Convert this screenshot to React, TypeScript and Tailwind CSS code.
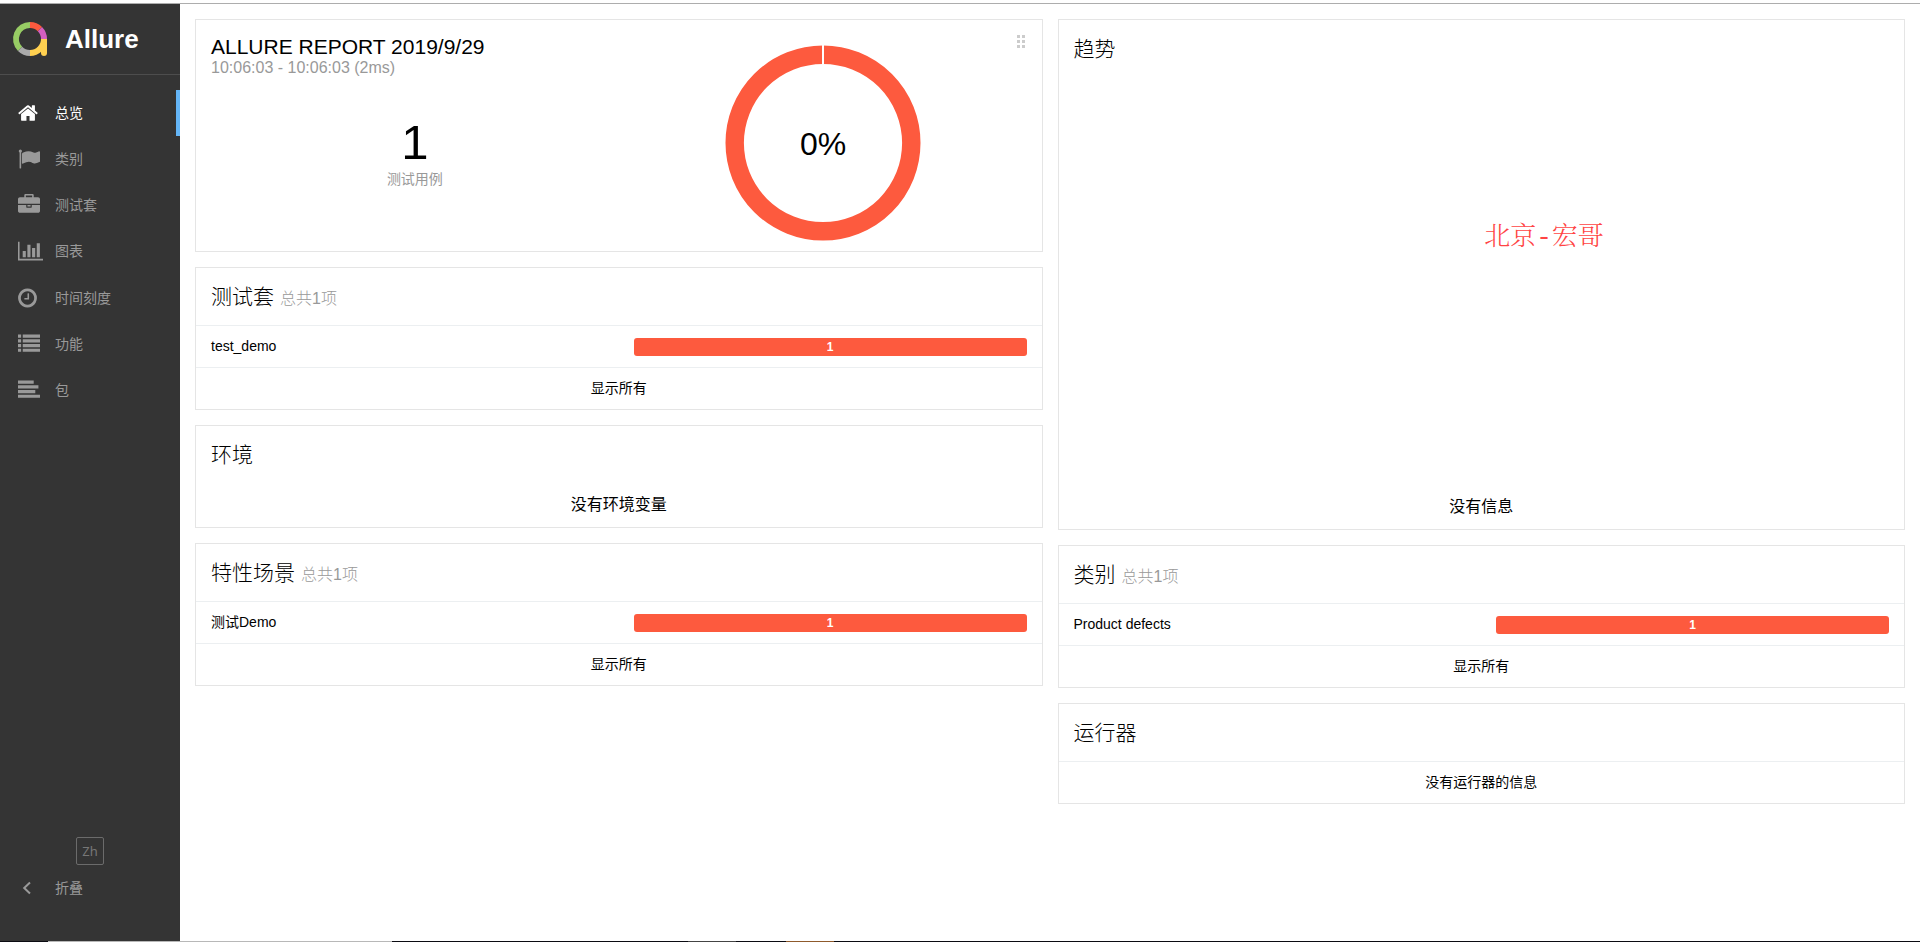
import type { ReactNode } from 'react';

type IconName = 'home' | 'flag' | 'briefcase' | 'chart' | 'clock' | 'list' | 'align';

const icons: Record<IconName, { x: number; width: number; size: string; d: string }> = {
  home: {
    x: 64,
    width: 1664,
    size: 'w-5',
    d: 'M1472 992v480q0 26-19 45t-45 19h-384v-384h-256v384h-384q-26 0-45-19t-19-45v-480q0-1 .5-3t.5-3l575-474 575 474q1 2 1 6zm223-69l-62 74q-8 9-21 11h-3q-13 0-21-7l-692-577-692 577q-12 8-24 7-13-2-21-11l-62-74q-8-10-7-23.5t11-21.5l719-599q32-26 76-26t76 26l244 204v-195q0-14 9-23t23-9h192q14 0 23 9t9 23v408l219 182q10 8 11 21.5t-7 23.5z',
  },
  flag: {
    x: 0,
    width: 1792,
    size: 'w-[22px]',
    d: 'M320 256q0 72-64 110v1266q0 13-9.5 22.5t-22.5 9.5h-64q-13 0-22.5-9.5t-9.5-22.5v-1266q-64-38-64-110 0-53 37.5-90.5t90.5-37.5 90.5 37.5 37.5 90.5zm1472 64v763q0 25-12.5 38.5t-39.5 27.5q-215 116-369 116-61 0-123.5-22t-108.5-48-115.5-48-142.5-22q-192 0-464 146-17 9-33 9-26 0-45-19t-19-45v-742q0-32 31-55 21-14 79-43 236-120 421-120 107 0 200 29t219 88q38 19 88 19 54 0 117.5-21t110-47 88-47 54.5-21q26 0 45 19t19 45z',
  },
  briefcase: {
    x: 0,
    width: 1792,
    size: 'w-[22px]',
    d: 'M640 256h512v-128h-512v128zm1152 640v480q0 66-47 113t-113 47h-1472q-66 0-113-47t-47-113v-480h672v160q0 26 19 45t45 19h320q26 0 45-19t19-45v-160h672zm-768 0v128h-256v-128h256zm768-480v384h-1792v-384q0-66 47-113t113-47h352v-160q0-40 28-68t68-28h576q40 0 68 28t28 68v160h352q66 0 113 47t47 113z',
  },
  chart: {
    x: 0,
    width: 2048,
    size: 'w-[25px]',
    d: 'M640 896v512h-256v-512h256zm384-512v1024h-256v-1024h256zm1024 1152v128h-2048v-1536h128v1408h1920zm-640-896v768h-256v-768h256zm384-384v1152h-256v-1152h256z',
  },
  clock: {
    x: 128,
    width: 1536,
    size: 'w-[19px]',
    d: 'M1024 544v448q0 14-9 23t-23 9h-320q-14 0-23-9t-9-23v-64q0-14 9-23t23-9h224v-352q0-14 9-23t23-9h64q14 0 23 9t9 23zm416 352q0-148-73-273t-198-198-273-73-273 73-198 198-73 273 73 273 198 198 273 73 273-73 198-198 73-273zm224 0q0 209-103 385.5t-279.5 279.5-385.5 103-385.5-103-279.5-279.5-103-385.5 103-385.5 279.5-279.5 385.5-103 385.5 103 279.5 279.5 103 385.5z',
  },
  list: {
    x: 0,
    width: 1792,
    size: 'w-[22px]',
    d: 'M0 128h256v256H0zM384 128h1408v256H384zM0 512h256v256H0zM384 512h1408v256H384zM0 896h256v256H0zM384 896h1408v256H384zM0 1280h256v256H0zM384 1280h1408v256H384z',
  },
  align: {
    x: 0,
    width: 1792,
    size: 'w-[22px]',
    d: 'M0 128h1280v256H0zM0 512h1664v256H0zM0 896h1408v256H0zM0 1280h1792v256H0z',
  },
};

const navItems: { icon: IconName; label: string }[] = [
  { icon: 'home', label: '总览' },
  { icon: 'flag', label: '类别' },
  { icon: 'briefcase', label: '测试套' },
  { icon: 'chart', label: '图表' },
  { icon: 'clock', label: '时间刻度' },
  { icon: 'list', label: '功能' },
  { icon: 'align', label: '包' },
];

function NavIcon({ name }: { name: IconName }) {
  const { x, width, size, d } = icons[name];
  return (
    <span className="w-[37px] shrink-0">
      <svg viewBox={`${x} 0 ${width} 1792`} className={`h-[22px] ${size}`} fill="currentColor" aria-hidden="true">
        <path d={d} />
      </svg>
    </span>
  );
}

function Logo() {
  return (
    <svg viewBox="0 0 36 36" className="size-9" fill="none" strokeWidth="6" aria-hidden="true">
      <path d="M18 4A14 14 0 0 0 8.1 27.9" stroke="#97cc64" />
      <path d="M8.1 27.9A14 14 0 0 0 18 32" stroke="#aaaaaa" />
      <path d="M18 4A14 14 0 0 1 27.9 8.1" stroke="#fd5a3e" />
      <path d="M27.9 8.1A14 14 0 0 1 32 18" stroke="#d35ebe" />
      <path d="M32 18A14 14 0 0 1 18 32" stroke="#ffd050" />
      <path d="M32 18V32" stroke="#ffd050" />
      <circle cx="32" cy="32" r="3" fill="#ffd050" stroke="none" />
    </svg>
  );
}

function Sidebar() {
  return (
    <aside className="flex w-[180px] shrink-0 flex-col bg-[#343434] text-[#999]">
      <a href="#" className="flex h-[71px] items-center border-b border-[#4d4d4d] pl-3 text-white">
        <Logo />
        <span className="pt-0.5 pl-[17px] text-[26px] font-bold">Allure</span>
      </a>
      <nav className="mt-[15px] grid h-[324px] shrink-0 grid-rows-7">
        {navItems.map(({ icon, label }, i) => (
          <a
            key={icon}
            href={`#${icon}`}
            className={
              i === 0
                ? 'flex items-center border-r-4 border-[#64b5f6] pb-px pl-[18px] text-white'
                : 'flex items-center border-r-4 border-transparent pb-px pl-[18px]'
            }
          >
            <NavIcon name={icon} />
            {label}
          </a>
        ))}
      </nav>
      <div className="mt-auto flex flex-col pb-[30px]">
        <button className="size-7 self-center rounded-xs border border-[#6b6b6b] font-['Noto_Sans',sans-serif] text-[13px] leading-6 text-[#777]">
          Zh
        </button>
        <button className="flex h-[46px] items-center pl-[18px] text-left">
          <span className="w-[37px] pl-1">
            <svg viewBox="0 0 10 14" className="h-3.5 w-2.5" fill="none" stroke="currentColor" strokeWidth="2" aria-hidden="true">
              <path d="M8 1.5L2.2 7L8 12.5" />
            </svg>
          </span>
          折叠
        </button>
      </div>
    </aside>
  );
}

function Card({ children }: { children: ReactNode }) {
  return <section className="relative border border-[#e5e5e5]">{children}</section>;
}

function CardTitle({ title, subtitle }: { title: string; subtitle?: string }) {
  return (
    <h2 className="h-[57px] px-[15px] pt-[14px] text-[21px] leading-[30px] font-light">
      {title}
      {subtitle && <small className="pl-1.5 text-base leading-none text-[#999]">{subtitle}</small>}
    </h2>
  );
}

function ListCard({ title, name }: { title: string; name: string }) {
  return (
    <Card>
      <CardTitle title={title} subtitle="总共1项" />
      <a href="#detail" className="flex h-[42px] items-center border-t border-[#eceff1] px-[15px]">
        <span className="w-1/2 pb-0.5">{name}</span>
        <span className="w-1/2 pl-[15px]">
          <span className="block h-[18px] rounded-[3px] bg-[#fd5a3e] text-center text-xs leading-[18px] font-bold text-white">
            1
          </span>
        </span>
      </a>
      <a href="#all" className="flex h-[42px] items-center justify-center border-t border-[#eceff1] pb-0.5">
        显示所有
      </a>
    </Card>
  );
}

function SummaryCard() {
  return (
    <Card>
      <div className="flex h-[231px] px-[15px]">
        <div className="flex w-1/2 flex-col pt-[15px]">
          <h2 className="text-[21px] leading-6 whitespace-nowrap">ALLURE REPORT 2019/9/29</h2>
          <div className="text-base leading-[18px] text-[#999]">10:06:03 - 10:06:03 (2ms)</div>
          <div className="mt-[38px] text-center">
            <div className="text-[49px] leading-[54px]">1</div>
            <div className="leading-5 text-[#999]">测试用例</div>
          </div>
        </div>
        <div className="grid w-1/2 place-items-center pt-3.5">
          <svg viewBox="0 0 196 196" className="size-[196px]" role="img" aria-label="0%">
            <circle cx="98" cy="98" r="88.3" fill="none" stroke="#fd5a3e" strokeWidth="18.4" />
            <path d="M98 0V20" stroke="#fff" strokeWidth="2" />
            <text x="98" y="110" textAnchor="middle" fontSize="32">
              0%
            </text>
          </svg>
        </div>
      </div>
      <div className="absolute top-[15px] right-[17px] grid grid-cols-2 gap-0.5">
        {[0, 1, 2, 3, 4, 5].map((dot) => (
          <span key={dot} className="size-[3px] bg-[#ccc]" />
        ))}
      </div>
    </Card>
  );
}

export default function App() {
  return (
    <div className="flex min-h-screen flex-col bg-white pt-[3px] font-['Liberation_Sans','Noto_Sans_CJK_SC',sans-serif] text-sm text-black">
      <div className="h-px bg-[#adadad]" />
      <div className="flex grow">
        <Sidebar />
        <main className="grid grow grid-cols-2 items-start gap-[15px] p-[15px]">
          <div className="flex flex-col gap-[15px]">
            <SummaryCard />
            <ListCard title="测试套" name="test_demo" />
            <Card>
              <CardTitle title="环境" />
              <p className="h-11 text-center text-base leading-[44px]">没有环境变量</p>
            </Card>
            <ListCard title="特性场景" name="测试Demo" />
          </div>
          <div className="flex flex-col gap-[15px]">
            <Card>
              <CardTitle title="趋势" />
              <p className="pt-[408px] text-center text-base leading-[44px]">没有信息</p>
              <span className="absolute top-[198px] left-1/2 pl-[3px] font-['Liberation_Mono','Noto_Serif_CJK_SC','Noto_Sans_CJK_SC',serif] text-[26px] leading-10 font-light whitespace-nowrap text-[#ff4444]">
                北京-宏哥
              </span>
            </Card>
            <ListCard title="类别" name="Product defects" />
            <Card>
              <CardTitle title="运行器" />
              <p className="h-[42px] border-t border-[#eceff1] text-center leading-[40px]">没有运行器的信息</p>
            </Card>
          </div>
        </main>
      </div>
      <div className="flex h-px bg-[#0b0b12]">
        <div className="ml-12 w-[344px] bg-[#b8b8b8]" />
        <div className="ml-[296px] w-12 bg-[#444]" />
        <div className="ml-[50px] w-12 bg-[#8f5a2c]" />
      </div>
    </div>
  );
}
